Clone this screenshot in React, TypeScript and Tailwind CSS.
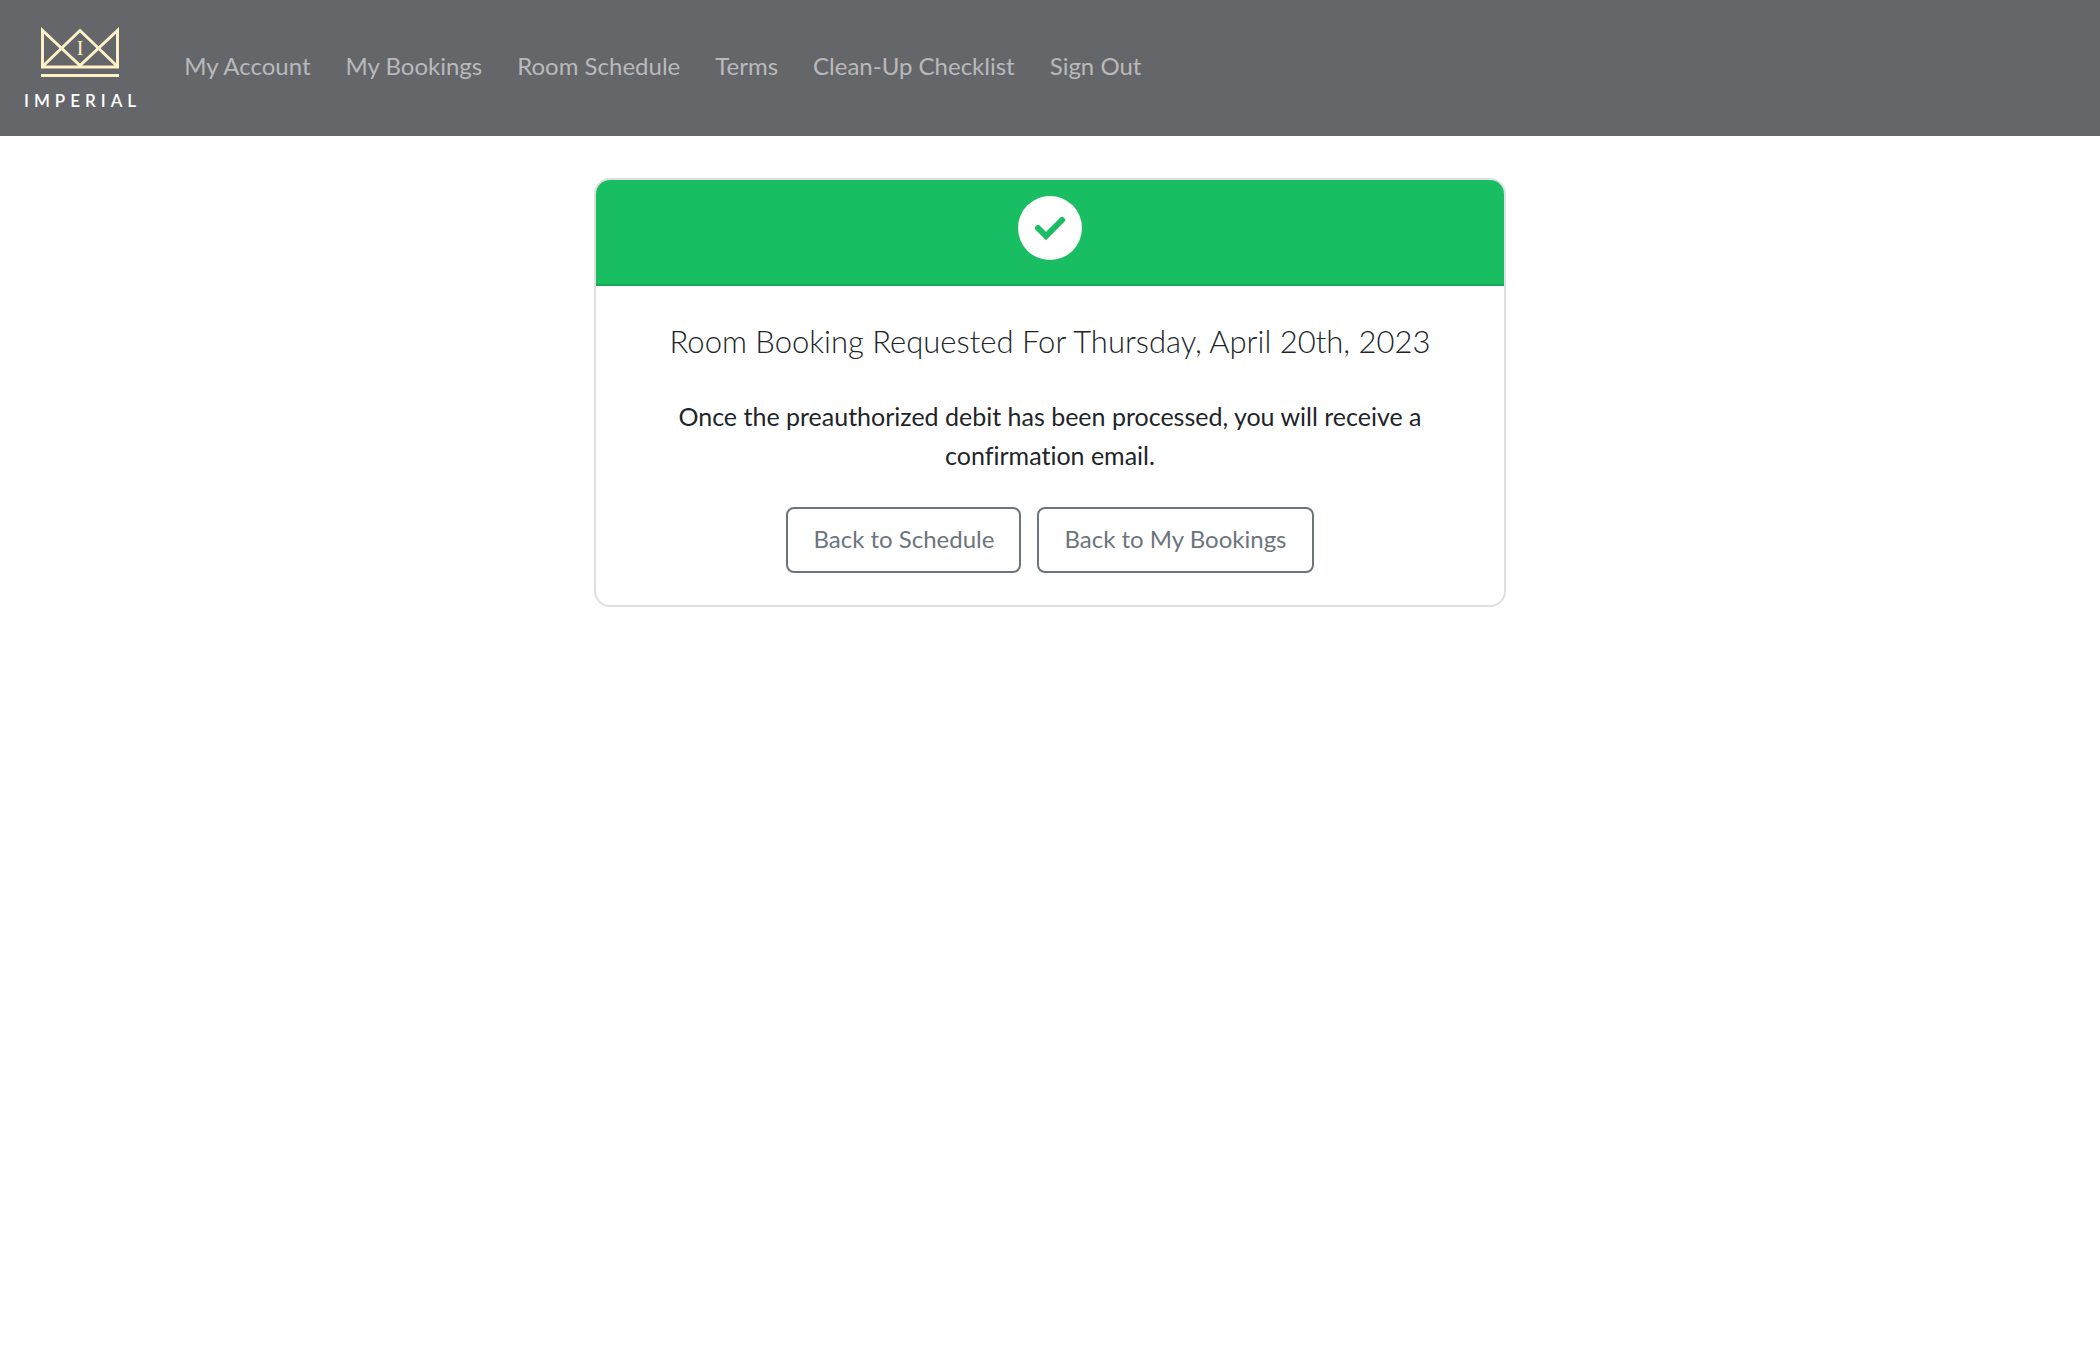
const links = [
  "My Account",
  "My Bookings",
  "Room Schedule",
  "Terms",
  "Clean-Up Checklist",
  "Sign Out",
];

function Logo() {
  return (
    <a href="#" aria-label="Imperial" className="flex flex-col items-center pt-0.5">
      <svg width="78" height="50" viewBox="0 0 78 50" fill="none" stroke="#fdf1c6" strokeWidth="3">
        <path d="M1.5 3.5V40H76.5V3.5L39 38.5L1.5 3.5Z" />
        <path d="M1.5 39.5L39 3.5L76.5 39.5" />
        <path d="M0 48.5H78" />
        <text
          x="39"
          y="28"
          textAnchor="middle"
          fill="#fdf1c6"
          stroke="none"
          className="text-[20px] font-['Liberation_Serif',serif]"
        >
          I
        </text>
      </svg>
      <span className="mt-3.5 -mr-[5px] text-[17px] leading-5 tracking-[5px] font-semibold text-white">
        IMPERIAL
      </span>
    </a>
  );
}

function Navbar() {
  return (
    <nav className="flex min-h-[136px] items-center gap-8 bg-[#65666a] px-6">
      <Logo />
      <ul className="flex flex-wrap gap-[3px] pb-1 text-2xl">
        {links.map((label) => (
          <li key={label}>
            <a href="#" className="block px-4 py-4 text-[#b9b9bb]">
              {label}
            </a>
          </li>
        ))}
      </ul>
    </nav>
  );
}

function CheckCircle() {
  return (
    <svg width="64" height="64" viewBox="0 0 64 64" fill="none" className="mx-auto">
      <circle cx="32" cy="32" r="32" fill="#fff" />
      <path
        d="M20 32L28 40L44 24"
        stroke="#1abe62"
        strokeWidth="6"
        strokeLinecap="round"
      />
    </svg>
  );
}

function OutlineButton({ label }: { label: string }) {
  return (
    <button
      type="button"
      className="rounded-lg border-2 border-[#6c757d] px-[25px] pt-[11px] pb-[13px] text-2xl leading-[38px] text-[#6c757d]"
    >
      {label}
    </button>
  );
}

export default function App() {
  return (
    <div className="min-h-screen bg-white font-['Lato',sans-serif] text-[25px] leading-[39px] text-[#212529]">
      <Navbar />
      <main className="px-6 pt-[42px]">
        <section className="mx-auto max-w-[912px] overflow-hidden rounded-2xl border-2 border-[#dfdfdf] text-center">
          <div className="border-b-2 border-[#17a656] bg-[#1abe62] pt-4 pb-6">
            <CheckCircle />
          </div>
          <div className="px-8 pt-9 pb-8">
            <h5 className="text-[31px] leading-[39px] font-light">
              Room Booking Requested For Thursday, April 20th, 2023
            </h5>
            <p className="mt-9 px-8 [font-variant-ligatures:none]">
              Once the preauthorized debit has been processed, you will receive a confirmation email.
            </p>
            <div className="mt-8 flex flex-wrap justify-center gap-4">
              <OutlineButton label="Back to Schedule" />
              <OutlineButton label="Back to My Bookings" />
            </div>
          </div>
        </section>
      </main>
    </div>
  );
}
